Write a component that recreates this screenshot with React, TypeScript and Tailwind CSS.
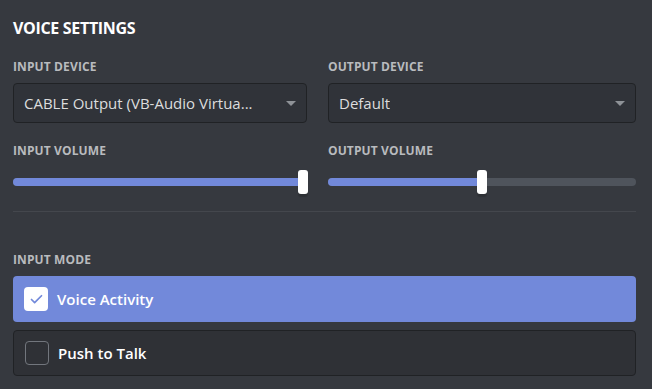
import { Check } from "lucide-react";

function Label({ children }: { children: string }) {
  return (
    <div className="text-[12px] leading-[16px] font-bold uppercase tracking-[0.01em] text-[#b9bbbe]">
      {children}
    </div>
  );
}

function Select({ value }: { value: string }) {
  return (
    <div className="mt-2 h-[40px] flex items-center justify-between rounded-[4px] border border-[#202225] bg-[#303339] pl-[10px] pr-[10px]">
      <span className="text-[15px] text-[#dcddde] truncate">{value}</span>
      <span className="w-0 h-0 border-l-[5px] border-r-[5px] border-t-[5px] border-l-transparent border-r-transparent border-t-[#8e9297]" />
    </div>
  );
}

function Slider({ percent }: { percent: number }) {
  return (
    <div className="mt-[11px] relative h-[24px] flex items-center">
      <div className="w-full h-[8px] rounded-full bg-[#4f545c] overflow-hidden">
        <div className="h-full bg-[#7289da]" style={{ width: `${percent}%` }} />
      </div>
      <div
        className="absolute top-0 w-[10px] h-[24px] rounded-[3px] bg-white shadow-[0_3px_1px_rgba(0,0,0,0.15)]"
        style={{ left: `calc(${percent}% - 5px)` }}
      />
    </div>
  );
}

function ModeRow({ label, checked }: { label: string; checked?: boolean }) {
  return (
    <div
      className={
        checked
          ? "h-[46px] flex items-center gap-[9px] px-[11px] rounded-[4px] bg-[#7289da]"
          : "h-[46px] flex items-center gap-[9px] px-[11px] rounded-[4px] border border-[#202225] bg-[#2f3136]"
      }
    >
      {checked ? (
        <div className="w-[24px] h-[24px] rounded-[4px] bg-white flex items-center justify-center">
          <Check className="w-[15px] h-[15px] text-[#7289da]" strokeWidth={2.75} />
        </div>
      ) : (
        <div className="w-[24px] h-[24px] rounded-[4px] border border-[#72767d]" />
      )}
      <span className="text-[15px] font-semibold text-white">{label}</span>
    </div>
  );
}

export default function App() {
  return (
    <div
      className="w-[652px] h-[389px] bg-[#36393f] overflow-hidden"
      style={{ fontFamily: '"Open Sans", "Noto Sans", sans-serif' }}
    >
      <div className="w-[623px] ml-[13px] pt-[18px]">
        <h2 className="text-[16px] leading-[20px] font-bold uppercase tracking-[-0.02em] text-white">
          Voice Settings
        </h2>

        <div className="mt-[21px] grid grid-cols-[294px_1fr] gap-x-[21px]">
          <div>
            <Label>Input Device</Label>
            <Select value="CABLE Output (VB-Audio Virtua..." />
          </div>
          <div>
            <Label>Output Device</Label>
            <Select value="Default" />
          </div>
        </div>

        <div className="mt-[20px] grid grid-cols-[294px_1fr] gap-x-[21px]">
          <div>
            <Label>Input Volume</Label>
            <Slider percent={98.5} />
          </div>
          <div>
            <Label>Output Volume</Label>
            <Slider percent={50} />
          </div>
        </div>

        <div className="mt-[17px] h-px bg-[#44474d]" />

        <div className="mt-[40px]">
          <Label>Input Mode</Label>
          <div className="mt-2 flex flex-col gap-2">
            <ModeRow label="Voice Activity" checked />
            <ModeRow label="Push to Talk" />
          </div>
        </div>
      </div>
    </div>
  );
}
